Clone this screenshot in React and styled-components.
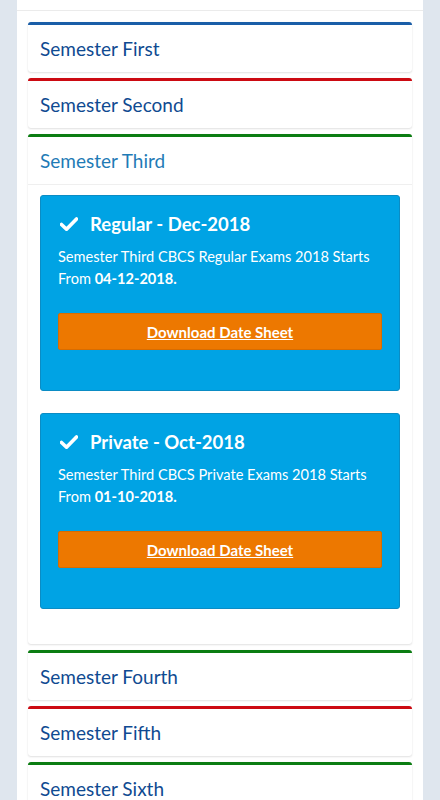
import React from 'react';
import styled, { createGlobalStyle } from 'styled-components';

const GlobalStyle = createGlobalStyle`
  html, body {
    margin: 0;
    padding: 0;
    background: #dfe6ee;
    font-family: Lato, "Open Sans", sans-serif;
  }
`;

const Page = styled.div`
  margin: 0 17px;
  background: #fff;
  min-height: 800px;
`;

const TopStrip = styled.div`
  height: 10px;
  border-bottom: 1px solid #ebebeb;
`;

const List = styled.div`
  padding: 11px 11px 0;
`;

const Panel = styled.div`
  background: #fff;
  border-top: 3px solid ${(p) => p.color};
  border-radius: 3px;
  box-shadow: 0 1px 2px rgba(0, 0, 0, 0.12), 0 0 1px rgba(0, 0, 0, 0.06);
  margin-bottom: 6px;
`;

const Header = styled.div`
  height: 47px;
  padding: 0 12px;
  display: flex;
  align-items: center;
  font-size: 19px;
  color: ${(p) => (p.open ? '#1f7bb6' : '#0f4a91')};
  border-bottom: ${(p) => (p.open ? '1px solid #efefef' : 'none')};
`;

const Body = styled.div`
  padding: 10px 12px 13px;
`;

const Notice = styled.div`
  background: #00a3e4;
  border: 1px solid #0b8cc4;
  border-radius: 3px;
  padding: 13px 17px 40px;
  color: #fff;
  margin-bottom: 22px;
`;

const Title = styled.div`
  display: flex;
  align-items: center;
  gap: 12px;
  font-size: 18.5px;
  font-weight: 700;
  padding-left: 2px;
  height: 30px;
  margin-bottom: 7px;
`;

const Text = styled.p`
  margin: 0;
  font-size: 14.6px;
  line-height: 22px;
`;

const Button = styled.a`
  display: flex;
  align-items: center;
  justify-content: center;
  height: 35px;
  margin-top: 23px;
  background: #ed7800;
  border: 1px solid #d96c00;
  border-radius: 2px;
  color: #fff;
  font-size: 15px;
  font-weight: 700;
  text-decoration: underline;
`;

const Check = () => (
  <svg width="18" height="16" viewBox="0 0 18 16">
    <path d="M1.5 8.5 L6.5 13.2 L16.5 3" fill="none" stroke="#fff" strokeWidth="3.6" strokeLinecap="round" strokeLinejoin="round" />
  </svg>
);

const semesters = [
  { name: 'Semester First', color: '#1a5ea8' },
  { name: 'Semester Second', color: '#cc0a12' },
  { name: 'Semester Third', color: '#0b7d12', open: true },
  { name: 'Semester Fourth', color: '#0b7d12' },
  { name: 'Semester Fifth', color: '#cc0a12' },
  { name: 'Semester Sixth', color: '#0b7d12' },
];

const notices = [
  { title: 'Regular - Dec-2018', text: 'Semester Third CBCS Regular Exams 2018 Starts From ', date: '04-12-2018.' },
  { title: 'Private - Oct-2018', text: 'Semester Third CBCS Private Exams 2018 Starts From ', date: '01-10-2018.' },
];

export default function App() {
  return (
    <>
      <GlobalStyle />
      <Page>
        <TopStrip />
        <List>
          {semesters.map((s) => (
            <Panel key={s.name} color={s.color}>
              <Header open={s.open}>{s.name}</Header>
              {s.open && (
                <Body>
                  {notices.map((n) => (
                    <Notice key={n.title}>
                      <Title>
                        <Check />
                        {n.title}
                      </Title>
                      <Text>
                        {n.text}
                        <b>{n.date}</b>
                      </Text>
                      <Button>Download Date Sheet</Button>
                    </Notice>
                  ))}
                </Body>
              )}
            </Panel>
          ))}
        </List>
      </Page>
    </>
  );
}
